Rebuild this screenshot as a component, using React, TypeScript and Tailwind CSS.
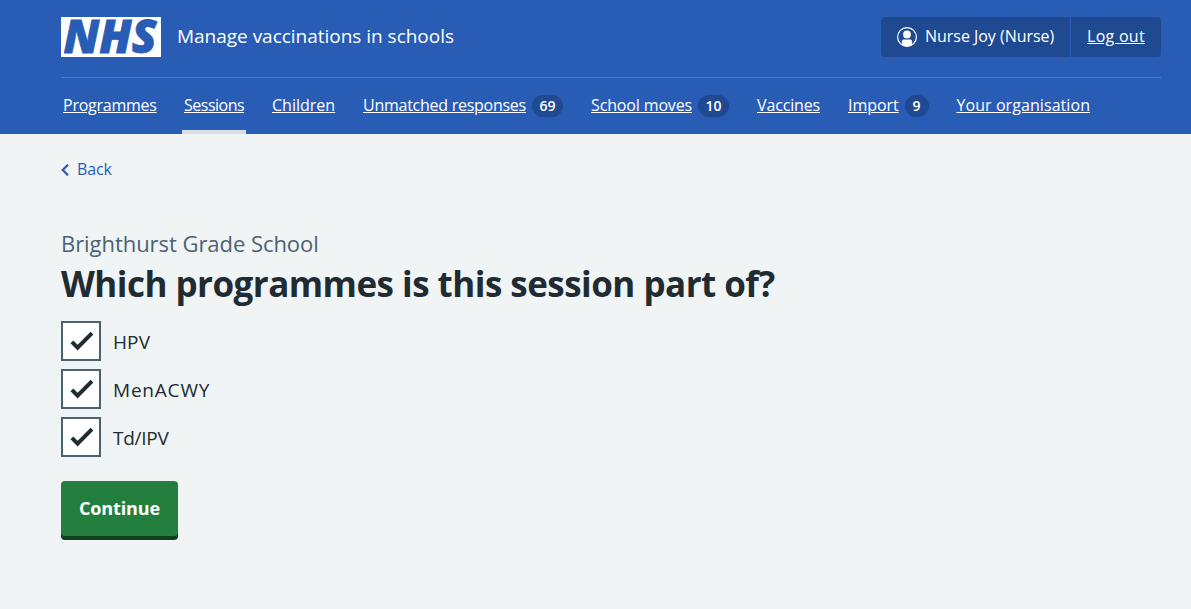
type NavItem = { label: string; text: string; count?: number; badge?: string; current?: boolean };

const navItems: NavItem[] = [
  { label: 'Programmes', text: 'w-[93px] tracking-[-0.25px]' },
  { label: 'Sessions', text: 'w-[60px] tracking-[-0.5px]', current: true },
  { label: 'Children', text: 'w-[63px]' },
  { label: 'Unmatched responses', text: 'w-[163px] tracking-[-0.26px]', count: 69, badge: 'w-[31px]' },
  { label: 'School moves', text: 'w-[101px] tracking-[-0.14px]', count: 10, badge: 'w-[31px]' },
  { label: 'Vaccines', text: 'w-[63px] tracking-[-0.15px]' },
  { label: 'Import', text: 'w-[50.5px] tracking-[-0.05px]', count: 9, badge: 'w-[24px]' },
  { label: 'Your organisation', text: 'w-[134px] tracking-[0.07px]' },
];

const programmes = [
  { label: 'HPV', tracking: 'tracking-[0.1px]' },
  { label: 'MenACWY', tracking: 'tracking-[0.8px]' },
  { label: 'Td/IPV', tracking: 'tracking-[-0.25px]' },
];

function Logo() {
  return (
    <svg width="100" height="40" viewBox="0 0 100 40" role="img" aria-label="NHS" className="block shrink-0 overflow-visible">
      <rect width="100" height="40" fill="#fff" />
      <g
        fontFamily="'Open Sans', sans-serif"
        fontStyle="italic"
        fontWeight="800"
        fontSize="46"
        fill="#285cb5"
        stroke="#285cb5"
        strokeWidth="0.8"
      >
        <text x="2.5" y="36.4" textLength="93" lengthAdjust="spacingAndGlyphs">NHS</text>
      </g>
    </svg>
  );
}

function UserIcon() {
  return (
    <svg width="20" height="20" viewBox="0 0 20 20" aria-hidden="true" className="shrink-0">
      <circle cx="10" cy="10" r="9.4" fill="none" stroke="#fff" strokeWidth="1.2" />
      <circle cx="10" cy="7.5" r="3.9" fill="#fff" />
      <path d="M4.8 17.7V15.3c0-1.9 1.1-3 2.9-3h4.6c1.8 0 2.9 1.1 2.9 3v2.4C13.8 18.9 12 19.5 10 19.5s-3.8-.6-5.2-1.8Z" fill="#fff" />
      <path d="M6.8 11.5c1.9 1.1 4.5 1.1 6.4 0" fill="none" stroke="#1f4990" strokeWidth=".6" />
    </svg>
  );
}

function Tick() {
  return (
    <svg width="36" height="36" viewBox="0 0 36 36" aria-hidden="true">
      <path d="m8.9 18.9 5.7 5.7L29 10.2" fill="none" stroke="#212b32" strokeWidth="4" />
    </svg>
  );
}

export default function App() {
  return (
    <div className="min-h-screen bg-[#f0f4f5] font-['Open_Sans',sans-serif] text-[#212b32]">
      <header className="h-[134px] bg-[#285cb5] pl-[61px] pr-[30px] text-white">
        <div className="flex h-[78px] items-start justify-between border-b border-[#5179c4] pt-[17px]">
          <div className="flex items-center gap-4">
            <Logo />
            <span className="pb-0.5 text-[19px] leading-6 tracking-[-0.02px] whitespace-nowrap">Manage vaccinations in schools</span>
          </div>
          <div className="flex h-10 w-[280px] overflow-hidden rounded bg-[#1f4990] leading-6">
            <div className="flex w-[190px] items-center gap-2 border-r border-[#285cb5] pl-4">
              <UserIcon />
              <span className="pb-0.5 tracking-[-0.03px] whitespace-nowrap">Nurse Joy (Nurse)</span>
            </div>
            <a href="#" className="flex items-center pl-4 pb-0.5 tracking-[0.28px] underline whitespace-nowrap">Log out</a>
          </div>
        </div>
        <nav className="flex h-14 gap-6">
          {navItems.map((item) => (
            <div
              key={item.label}
              className={
                item.current
                  ? 'flex items-center border-b-4 border-[#d8dde0] px-0.5 pt-1'
                  : 'flex items-center px-0.5'
              }
            >
              <a href="#" className={`${item.text} pb-0.5 leading-6 whitespace-nowrap underline`}>{item.label}</a>
              {item.count !== undefined && (
                <span className={`${item.badge} ml-1.5 flex h-[22px] items-center justify-center rounded-full bg-[#1f4990] text-sm font-semibold`}>
                  {item.count}
                </span>
              )}
            </div>
          ))}
        </nav>
      </header>

      <main className="pl-[61px]">
        <a href="#" className="mt-[23px] flex h-6 w-fit items-center gap-2 text-[#285cb5]">
          <svg width="8" height="12" viewBox="0 0 8 12" aria-hidden="true" className="mt-0.5">
            <path d="M7 .7 1.7 6 7 11.3" fill="none" stroke="currentColor" strokeWidth="2.2" />
          </svg>
          <span className="leading-6 tracking-[-0.1px]">Back</span>
        </a>
        <h1 className="pt-[46px]">
          <span className="block text-[22px] leading-8 font-normal tracking-[-0.05px] text-[#4c6272]">Brighthurst Grade School</span>
          <span className="block pt-0.5 text-[35px] leading-[46px] font-bold tracking-[-0.53px]">Which programmes is this session part of?</span>
        </h1>
        <div className="mt-3.5 flex flex-col gap-2">
          {programmes.map((programme) => (
            <label key={programme.label} className="flex h-10 items-center gap-3">
              <span className="size-10 border-2 border-[#4c6272] bg-white">
                <Tick />
              </span>
              <span className={`${programme.tracking} pt-0.5 text-[19px] leading-7`}>{programme.label}</span>
            </label>
          ))}
        </div>
        <button className="mt-6 h-[55px] w-[117px] rounded bg-[#237f3e] text-[18px] font-bold tracking-[-0.12px] text-white shadow-[0_4px_0_#0f3f1c]">
          Continue
        </button>
      </main>
    </div>
  );
}
